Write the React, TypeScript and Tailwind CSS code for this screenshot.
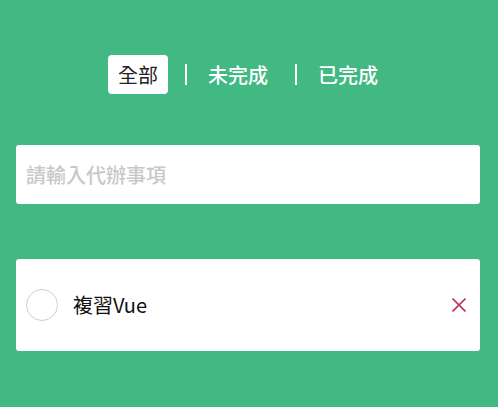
import { useState } from 'react';

type Filter = 'all' | 'active' | 'done';

interface Todo {
  id: number;
  title: string;
  done: boolean;
}

const tabs: { key: Filter; label: string }[] = [
  { key: 'all', label: '全部' },
  { key: 'active', label: '未完成' },
  { key: 'done', label: '已完成' },
];

export default function App() {
  const [filter, setFilter] = useState<Filter>('all');
  const [text, setText] = useState('');
  const [todos, setTodos] = useState<Todo[]>([{ id: 1, title: '複習Vue', done: false }]);

  const shown = todos.filter((t) =>
    filter === 'all' ? true : filter === 'done' ? t.done : !t.done
  );

  function addTodo() {
    if (!text.trim()) return;
    setTodos([...todos, { id: Date.now(), title: text.trim(), done: false }]);
    setText('');
  }

  return (
    <div
      className="min-h-screen bg-[#42b883] pl-4 pr-[18px] pt-[55px]"
      style={{ fontFamily: '"Noto Sans CJK TC", "Noto Sans", sans-serif' }}
    >
      {/* filter tabs */}
      <div className="flex items-center justify-center">
        {tabs.map((tab, i) => (
          <div key={tab.key} className="flex items-center">
            {i > 0 && <span className="ml-[17px] mr-[11px] h-[21px] w-[2px] bg-white" />}
            <button
              onClick={() => setFilter(tab.key)}
              className={
                'h-[39px] rounded-[4px] px-[10px] text-[20px] ' +
                (filter === tab.key ? 'bg-white font-normal text-[#222]' : 'font-medium text-white')
              }
            >
              {tab.label}
            </button>
          </div>
        ))}
      </div>

      {/* new todo */}
      <input
        autoFocus
        value={text}
        onChange={(e) => setText(e.target.value)}
        onKeyDown={(e) => e.key === 'Enter' && addTodo()}
        placeholder="請輸入代辦事項"
        className="mt-[51px] block h-[59px] w-full rounded-[3px] bg-white px-[10px] text-[20px] font-medium text-[#333] caret-black outline-none placeholder:text-[#c8c8c8]"
      />

      {/* list */}
      <ul className="mt-[55px]">
        {shown.map((t) => (
          <li
            key={t.id}
            className="flex h-[92px] items-center rounded-[3px] bg-white pl-[10px] pr-[9px]"
          >
            <button
              onClick={() =>
                setTodos(todos.map((x) => (x.id === t.id ? { ...x, done: !x.done } : x)))
              }
              className="h-8 w-8 shrink-0 rounded-full border border-[#d0d0d0]"
            />
            <span className={'ml-[15px] text-[20px] text-[#111] ' + (t.done ? 'line-through' : '')}>
              {t.title}
            </span>
            <button
              onClick={() => setTodos(todos.filter((x) => x.id !== t.id))}
              className="ml-auto flex h-6 w-6 items-center justify-center"
            >
              <svg width="14" height="14" viewBox="0 0 14 14" stroke="#c0306a" strokeWidth="1.6">
                <path d="M0.5 0.5 L13.5 13.5 M13.5 0.5 L0.5 13.5" />
              </svg>
            </button>
          </li>
        ))}
      </ul>
    </div>
  );
}
